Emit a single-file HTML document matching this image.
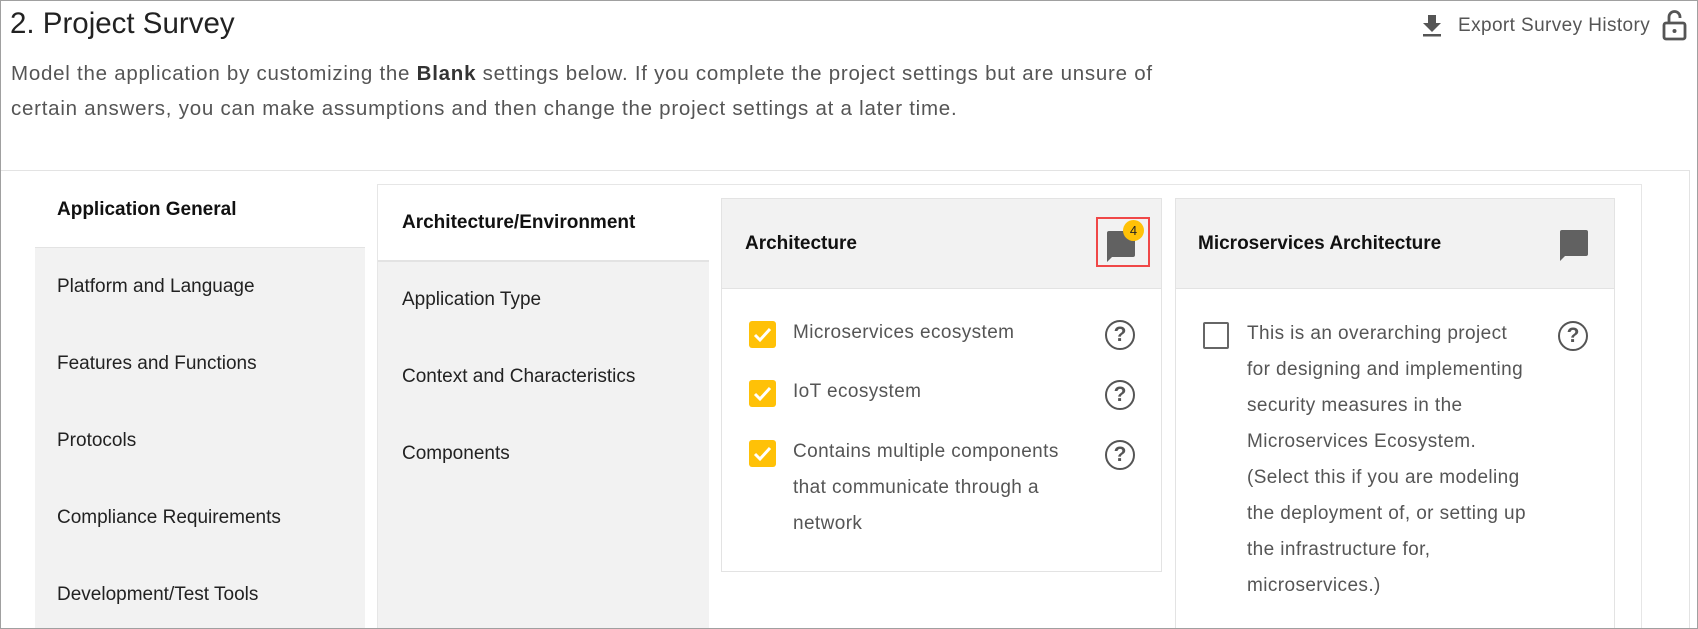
<!DOCTYPE html>
<html style="overflow:hidden;height:629px"><head><meta charset="utf-8"><style>
*{margin:0;padding:0;box-sizing:border-box}
body{width:1698px;height:629px;overflow:hidden;background:#fff;font-family:"Liberation Sans",Arial,sans-serif;position:relative;color:#222}
.a{position:absolute;white-space:nowrap}
.frame{position:absolute;left:0;top:0;width:1698px;height:629px;border:1px solid #a0a0a0;z-index:5;pointer-events:none}
.t{font-size:19px;color:#222}
.g{color:#555;font-size:19px;letter-spacing:0.4px}
.cb{position:absolute;width:27px;height:27px;background:#ffc107;border-radius:3px}
.cb svg{position:absolute;left:3px;top:4px}
.help{position:absolute;width:30px;height:30px;border:2.5px solid #555;border-radius:50%;color:#555;font-size:21px;font-weight:bold;text-align:center;line-height:25px}
</style></head><body>
<div class="frame"></div>
<div class="a" style="left:10px;top:7px;font-size:29.5px;color:#222">2. Project Survey</div>
<div class="a g" style="left:11px;top:56px;font-size:20.5px;line-height:35px;letter-spacing:0.75px">Model the application by customizing the <b style="color:#333">Blank</b> settings below. If you complete the project settings but are unsure of<br>certain answers, you can make assumptions and then change the project settings at a later time.</div>
<svg class="a" style="left:1421px;top:14px" width="22" height="24" viewBox="0 0 22 24"><path d="M7 1h8v8h5l-9 9-9-9h5z" fill="#555"/><rect x="2" y="20" width="18" height="2.5" fill="#555"/></svg>
<div class="a g" style="left:1458px;top:15px;font-size:19px">Export Survey History</div>
<svg class="a" style="left:1662px;top:9px" width="25" height="32" viewBox="0 0 25 32"><path d="M7 14V8a5.5 5.5 0 0 1 11 0v1" fill="none" stroke="#555" stroke-width="2.8"/><rect x="2" y="14" width="21" height="16" rx="2" fill="none" stroke="#555" stroke-width="2.8"/><circle cx="12.5" cy="22" r="2" fill="#555"/></svg>

<div class="a" style="left:0;top:170px;width:1690px;height:459px;border-top:1px solid #e3e3e3;border-right:1px solid #e3e3e3"></div>
<div class="a" style="left:377px;top:184px;width:1265px;height:445px;border-top:1px solid #e6e6e6;border-left:1px solid #e6e6e6;border-right:1px solid #e6e6e6"></div>

<div class="a" style="left:35px;top:247px;width:330px;height:382px;background:#f2f2f2;border-top:1px solid #e3e3e3"></div>
<div class="a t" style="left:57px;top:199px;font-weight:bold;color:#111;font-size:19px">Application General</div>
<div class="a t" style="left:57px;top:276px">Platform and Language</div>
<div class="a t" style="left:57px;top:353px">Features and Functions</div>
<div class="a t" style="left:57px;top:430px">Protocols</div>
<div class="a t" style="left:57px;top:507px">Compliance Requirements</div>
<div class="a t" style="left:57px;top:584px">Development/Test Tools</div>

<div class="a" style="left:378px;top:260px;width:331px;height:369px;background:#f2f2f2;border-top:2px solid #e3e3e3"></div>
<div class="a t" style="left:402px;top:212px;font-weight:bold;color:#111">Architecture/Environment</div>
<div class="a t" style="left:402px;top:289px">Application Type</div>
<div class="a t" style="left:402px;top:366px">Context and Characteristics</div>
<div class="a t" style="left:402px;top:443px">Components</div>

<div class="a" style="left:721px;top:198px;width:441px;height:374px;border:1px solid #e3e3e3"></div>
<div class="a" style="left:722px;top:199px;width:439px;height:90px;background:#f2f2f2;border-bottom:1px solid #e3e3e3"></div>
<div class="a t" style="left:745px;top:233px;font-weight:bold;color:#111">Architecture</div>
<div class="a" style="left:1096px;top:217px;width:54px;height:50px;border:2.5px solid #f04848"></div>
<svg class="a" style="left:1105px;top:230px" width="32" height="32" viewBox="0 0 32 32"><path d="M2 3a2 2 0 0 1 2-2h24a2 2 0 0 1 2 2v22a2 2 0 0 1-2 2H7l-5 5z" fill="#616161"/></svg>
<div class="a" style="left:1123px;top:220px;width:21px;height:21px;border-radius:50%;background:#ffc107;font-size:13px;text-align:center;line-height:21px;color:#222">4</div>

<div class="cb" style="left:749px;top:321px"><svg width="21" height="19" viewBox="0 0 21 19"><path d="M3 10l5 5 10-11" fill="none" stroke="#fff" stroke-width="3"/></svg></div>
<div class="a g" style="left:793px;top:322px">Microservices ecosystem</div>
<div class="help" style="left:1105px;top:320px">?</div>
<div class="cb" style="left:749px;top:380px"><svg width="21" height="19" viewBox="0 0 21 19"><path d="M3 10l5 5 10-11" fill="none" stroke="#fff" stroke-width="3"/></svg></div>
<div class="a g" style="left:793px;top:381px">IoT ecosystem</div>
<div class="help" style="left:1105px;top:380px">?</div>
<div class="cb" style="left:749px;top:440px"><svg width="21" height="19" viewBox="0 0 21 19"><path d="M3 10l5 5 10-11" fill="none" stroke="#fff" stroke-width="3"/></svg></div>
<div class="a g" style="left:793px;top:434px;line-height:36px">Contains multiple components<br>that communicate through a<br>network</div>
<div class="help" style="left:1105px;top:440px">?</div>

<div class="a" style="left:1175px;top:198px;width:440px;height:440px;border:1px solid #e3e3e3"></div>
<div class="a" style="left:1176px;top:199px;width:438px;height:90px;background:#f2f2f2;border-bottom:1px solid #e3e3e3"></div>
<div class="a t" style="left:1198px;top:233px;font-weight:bold;color:#111">Microservices Architecture</div>
<svg class="a" style="left:1558px;top:229px" width="32" height="32" viewBox="0 0 32 32"><path d="M2 3a2 2 0 0 1 2-2h24a2 2 0 0 1 2 2v22a2 2 0 0 1-2 2H7l-5 5z" fill="#616161"/></svg>
<div class="a" style="left:1203px;top:322px;width:26px;height:27px;border:2.5px solid #666;border-radius:2px"></div>
<div class="a g" style="left:1247px;top:316px;line-height:36px">This is an overarching project<br>for designing and implementing<br>security measures in the<br>Microservices Ecosystem.<br>(Select this if you are modeling<br>the deployment of, or setting up<br>the infrastructure for,<br>microservices.)</div>
<div class="help" style="left:1558px;top:321px">?</div>
</body></html>
